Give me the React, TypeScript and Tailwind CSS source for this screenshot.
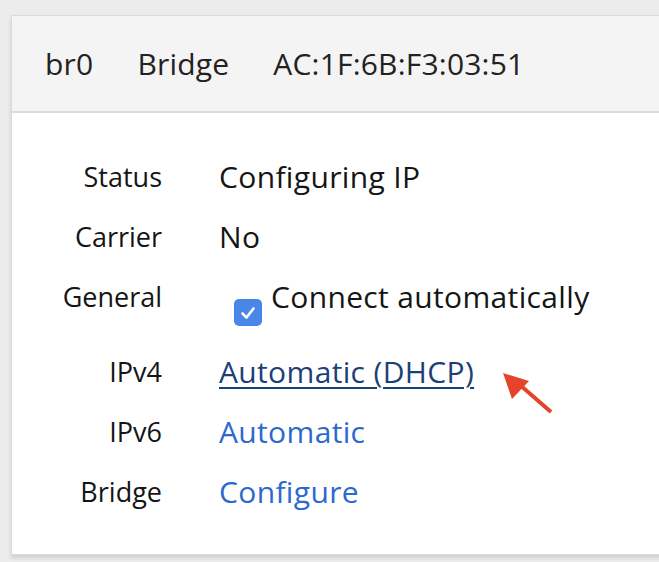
const rows = [
  { label: "Status", value: "Configuring IP" },
  { label: "Carrier", value: "No" },
];

function Arrow() {
  return (
    <svg width="56" height="50" viewBox="0 0 56 50" className="absolute left-[500px] top-[368px]">
      <line x1="20" y1="17" x2="51" y2="44" stroke="#e5432b" strokeWidth="4" />
      <polygon points="3,5 29,13 12,31" fill="#e5432b" />
    </svg>
  );
}

export default function App() {
  return (
    <div
      className="relative h-[562px] w-[659px] overflow-hidden bg-[#ececec] pl-[11px] pt-[15px]"
      style={{ fontFamily: "'Open Sans', sans-serif" }}
    >
      <div className="w-[700px] border border-[#dadada] bg-white shadow-[0_3px_4px_rgba(0,0,0,0.12)]">
        <div className="flex h-[97px] items-center gap-[44px] border-b-2 border-[#dcdcdc] bg-[#f4f4f4] pl-[33px] text-[30px] tracking-[0.2px] text-[#222]">
          <span>br0</span>
          <span>Bridge</span>
          <span>AC:1F:6B:F3:03:51</span>
        </div>
        <div className="grid grid-cols-[150px_1fr] gap-x-[57px] pb-[42px] pt-[44px] text-[30px] tracking-[0.35px] text-[#151515]">
          {rows.map((r) => (
            <div key={r.label} className="contents">
              <div className="h-[60px] text-right text-[27px] leading-[40px] tracking-normal">{r.label}</div>
              <div className="leading-[40px]">{r.value}</div>
            </div>
          ))}
          <div className="h-[75px] text-right text-[27px] leading-[40px] tracking-normal">General</div>
          <div className="flex items-start gap-[9px] pl-[15px] leading-[40px]">
            <span className="mt-[22px] flex h-[27px] w-[28px] shrink-0 items-center justify-center rounded-[5px] bg-[#4a86e8]">
              <svg width="18" height="18" viewBox="0 0 18 18">
                <path d="M3.5 9.5 L7.5 13.5 L14.5 4.5" stroke="white" strokeWidth="2.6" fill="none" strokeLinecap="round" strokeLinejoin="round" />
              </svg>
            </span>
            <span>Connect automatically</span>
          </div>
          <div className="h-[60px] text-right text-[27px] leading-[40px] tracking-normal">IPv4</div>
          <div className="leading-[40px]">
            <a className="text-[#1c3f78] underline decoration-[2px] underline-offset-[4px]">Automatic (DHCP)</a>
          </div>
          <div className="h-[60px] text-right text-[27px] leading-[40px] tracking-normal">IPv6</div>
          <div className="leading-[40px] text-[#2b69cc]">Automatic</div>
          <div className="h-[40px] text-right text-[27px] leading-[40px] tracking-normal">Bridge</div>
          <div className="leading-[40px] text-[#2b69cc]">Configure</div>
        </div>
      </div>
      <Arrow />
    </div>
  );
}
